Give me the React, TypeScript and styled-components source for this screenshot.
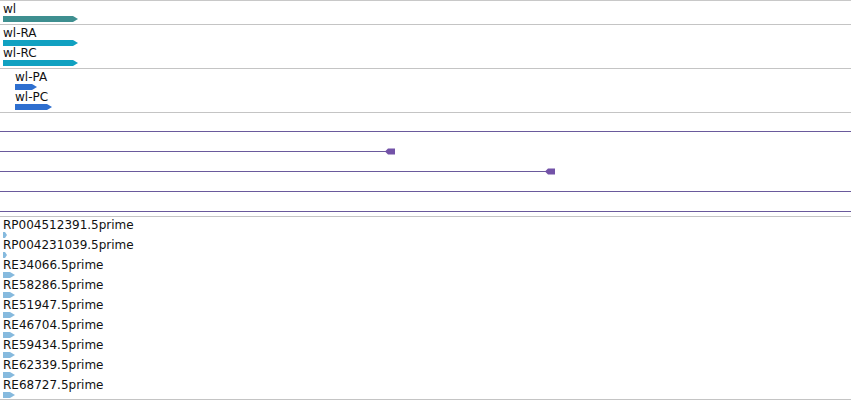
import styled, { createGlobalStyle } from "styled-components";

const GlobalStyle = createGlobalStyle`
  html, body {
    margin: 0;
    padding: 0;
    background: #ffffff;
  }
  body {
    font-family: "DejaVu Sans", "Liberation Sans", sans-serif;
    font-size: 12px;
    color: #111;
  }
`;

const Page = styled.div`
  width: 851px;
  height: 400px;
  overflow: hidden;
  border-top: 1px solid #c8c8c8;
`;

const Track = styled.div<{ $pad?: number }>`
  display: flex;
  flex-direction: column;
  padding-bottom: ${(p) => p.$pad ?? 3}px;
  border-bottom: 1px solid #c4c4c4;
`;

const Row = styled.div<{ $indent?: number }>`
  display: flex;
  flex-direction: column;
  height: 20px;
  padding-left: ${(p) => p.$indent ?? 3}px;
`;

const Label = styled.div`
  box-sizing: border-box;
  height: 14px;
  padding-top: 1px;
  line-height: 14px;
  white-space: nowrap;
`;

const Glyph = styled.svg`
  display: block;
  margin-top: 1px;
  overflow: visible;
`;

const LineRow = styled.div`
  height: 20px;
  box-sizing: border-box;
  padding-top: 15px;
`;

function Arrow({ width, color }: { width: number; color: string }) {
  const tip = Math.min(5, width / 2);
  return (
    <Glyph width={width} height={6}>
      <polygon
        points={`0,0 ${width - tip},0 ${width},3 ${width - tip},6 0,6`}
        fill={color}
      />
    </Glyph>
  );
}

function Feature({
  name,
  width,
  color,
  indent,
}: {
  name: string;
  width: number;
  color: string;
  indent?: number;
}) {
  return (
    <Row $indent={indent}>
      <Label>{name}</Label>
      <Arrow width={width} color={color} />
    </Row>
  );
}

const IntronLine = styled.svg`
  display: block;
  overflow: visible;
`;

function Intron({ end }: { end?: number }) {
  return (
    <LineRow>
      <IntronLine width={851} height={6}>
        <line
          x1={0}
          y1={3.5}
          x2={end ?? 851}
          y2={3.5}
          stroke="#6a5a9c"
          strokeWidth={1}
        />
        {end !== undefined && (
          <polygon
            points={`${end - 3},3.5 ${end},0.5 ${end + 7},0.5 ${end + 7},6.5 ${end},6.5`}
            fill="#7352a8"
          />
        )}
      </IntronLine>
    </LineRow>
  );
}

const primes = [
  { name: "RP004512391.5prime", w: 4 },
  { name: "RP004231039.5prime", w: 4 },
  { name: "RE34066.5prime", w: 12 },
  { name: "RE58286.5prime", w: 12 },
  { name: "RE51947.5prime", w: 12 },
  { name: "RE46704.5prime", w: 12 },
  { name: "RE59434.5prime", w: 12 },
  { name: "RE62339.5prime", w: 12 },
  { name: "RE68727.5prime", w: 12 },
];

export default function App() {
  return (
    <Page>
      <GlobalStyle />
      <Track>
        <Feature name="wl" width={75} color="#3e8f90" />
      </Track>
      <Track>
        <Feature name="wl-RA" width={75} color="#11a1c1" />
        <Feature name="wl-RC" width={75} color="#11a1c1" />
      </Track>
      <Track>
        <Feature name="wl-PA" width={22} color="#2f6fcf" indent={15} />
        <Feature name="wl-PC" width={37} color="#2f6fcf" indent={15} />
      </Track>
      <Track>
        <Intron />
        <Intron end={388} />
        <Intron end={548} />
        <Intron />
        <Intron />
      </Track>
      <Track $pad={2}>
        {primes.map((p) => (
          <Feature key={p.name} name={p.name} width={p.w} color="#86bade" />
        ))}
      </Track>
    </Page>
  );
}
